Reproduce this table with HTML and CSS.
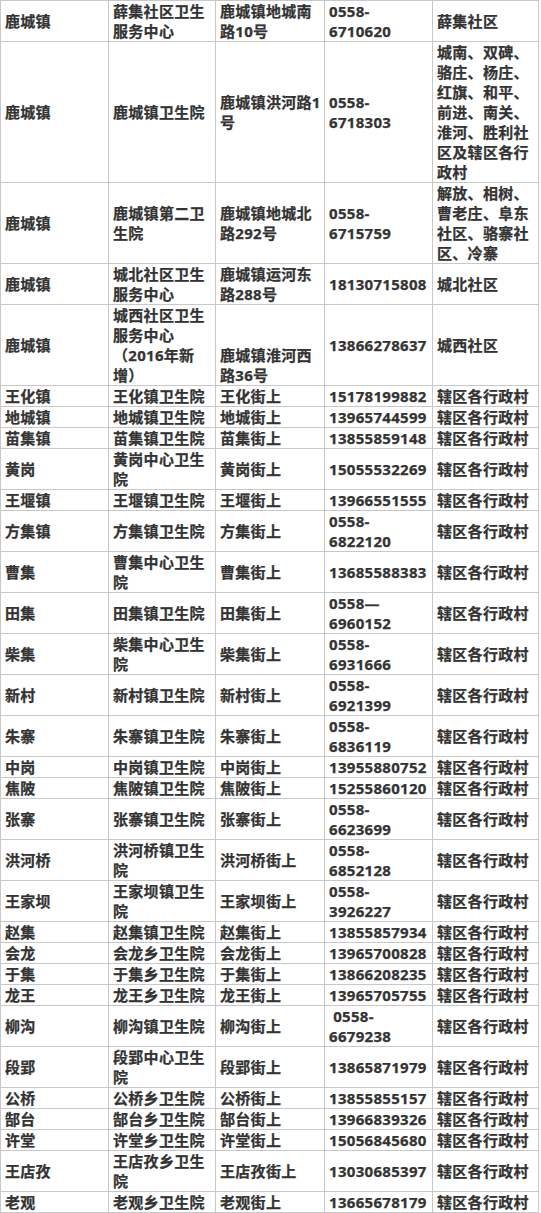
FILE: index.html
```html
<!DOCTYPE html>
<html lang="zh-CN">
<head>
<meta charset="utf-8">
<title>医疗机构一览</title>
<link rel="stylesheet" href="styles.css">
</head>
<body>
<table class="grid">
<colgroup>
<col class="c1"><col class="c2"><col class="c3"><col class="c4"><col class="c5">
</colgroup>
<tbody>
<tr><td>鹿城镇</td><td>薛集社区卫生服务中心</td><td>鹿城镇地城南路10号</td><td>0558-6710620</td><td>薛集社区</td></tr>
<tr><td>鹿城镇</td><td>鹿城镇卫生院</td><td>鹿城镇洪河路1号</td><td>0558-6718303</td><td>城南、双碑、骆庄、杨庄、红旗、和平、前进、南关、淮河、胜利社区及辖区各行政村</td></tr>
<tr><td>鹿城镇</td><td>鹿城镇第二卫生院</td><td>鹿城镇地城北路292号</td><td>0558-6715759</td><td>解放、相树、曹老庄、阜东社区、骆寨社区、冷寨</td></tr>
<tr><td>鹿城镇</td><td>城北社区卫生服务中心</td><td>鹿城镇运河东路288号</td><td>18130715808</td><td>城北社区</td></tr>
<tr><td>鹿城镇</td><td>城西社区卫生服务中心（2016年新增）</td><td><br><br>鹿城镇淮河西路36号</td><td>13866278637</td><td>城西社区</td></tr>
<tr><td>王化镇</td><td>王化镇卫生院</td><td>王化街上</td><td>15178199882</td><td>辖区各行政村</td></tr>
<tr><td>地城镇</td><td>地城镇卫生院</td><td>地城街上</td><td>13965744599</td><td>辖区各行政村</td></tr>
<tr><td>苗集镇</td><td>苗集镇卫生院</td><td>苗集街上</td><td>13855859148</td><td>辖区各行政村</td></tr>
<tr><td>黄岗</td><td>黄岗中心卫生院</td><td>黄岗街上</td><td>15055532269</td><td>辖区各行政村</td></tr>
<tr><td>王堰镇</td><td>王堰镇卫生院</td><td>王堰街上</td><td>13966551555</td><td>辖区各行政村</td></tr>
<tr><td>方集镇</td><td>方集镇卫生院</td><td>方集街上</td><td>0558-6822120</td><td>辖区各行政村</td></tr>
<tr><td>曹集</td><td>曹集中心卫生院</td><td>曹集街上</td><td>13685588383</td><td>辖区各行政村</td></tr>
<tr><td>田集</td><td>田集镇卫生院</td><td>田集街上</td><td>0558—6960152</td><td>辖区各行政村</td></tr>
<tr><td>柴集</td><td>柴集中心卫生院</td><td>柴集街上</td><td>0558-6931666</td><td>辖区各行政村</td></tr>
<tr><td>新村</td><td>新村镇卫生院</td><td>新村街上</td><td>0558-6921399</td><td>辖区各行政村</td></tr>
<tr><td>朱寨</td><td>朱寨镇卫生院</td><td>朱寨街上</td><td>0558-6836119</td><td>辖区各行政村</td></tr>
<tr><td>中岗</td><td>中岗镇卫生院</td><td>中岗街上</td><td>13955880752</td><td>辖区各行政村</td></tr>
<tr><td>焦陂</td><td>焦陂镇卫生院</td><td>焦陂街上</td><td>15255860120</td><td>辖区各行政村</td></tr>
<tr><td>张寨</td><td>张寨镇卫生院</td><td>张寨街上</td><td>0558-6623699</td><td>辖区各行政村</td></tr>
<tr><td>洪河桥</td><td>洪河桥镇卫生院</td><td>洪河桥街上</td><td>0558-6852128</td><td>辖区各行政村</td></tr>
<tr><td>王家坝</td><td>王家坝镇卫生院</td><td>王家坝街上</td><td>0558-3926227</td><td>辖区各行政村</td></tr>
<tr><td>赵集</td><td>赵集镇卫生院</td><td>赵集街上</td><td>13855857934</td><td>辖区各行政村</td></tr>
<tr><td>会龙</td><td>会龙乡卫生院</td><td>会龙街上</td><td>13965700828</td><td>辖区各行政村</td></tr>
<tr><td>于集</td><td>于集乡卫生院</td><td>于集街上</td><td>13866208235</td><td>辖区各行政村</td></tr>
<tr><td>龙王</td><td>龙王乡卫生院</td><td>龙王街上</td><td>13965705755</td><td>辖区各行政村</td></tr>
<tr><td>柳沟</td><td>柳沟镇卫生院</td><td>柳沟街上</td><td>&nbsp;0558-6679238</td><td>辖区各行政村</td></tr>
<tr><td>段郢</td><td>段郢中心卫生院</td><td>段郢街上</td><td>13865871979</td><td>辖区各行政村</td></tr>
<tr><td>公桥</td><td>公桥乡卫生院</td><td>公桥街上</td><td>13855855157</td><td>辖区各行政村</td></tr>
<tr><td>郜台</td><td>郜台乡卫生院</td><td>郜台街上</td><td>13966839326</td><td>辖区各行政村</td></tr>
<tr><td>许堂</td><td>许堂乡卫生院</td><td>许堂街上</td><td>15056845680</td><td>辖区各行政村</td></tr>
<tr><td>王店孜</td><td>王店孜乡卫生院</td><td>王店孜街上</td><td>13030685397</td><td>辖区各行政村</td></tr>
<tr><td>老观</td><td>老观乡卫生院</td><td>老观街上</td><td>13665678179</td><td>辖区各行政村</td></tr>
</tbody>
</table>
</body>
</html>
```

FILE: styles.css
```css
html, body {
  margin: 0;
  padding: 0;
  background: #ffffff;
}

.grid {
  width: 538px;
  table-layout: fixed;
  border-collapse: collapse;
  font-family: "Open Sans", "Noto Sans CJK SC", sans-serif;
  font-size: 15px;
  font-weight: 700;
  line-height: 20px;
  letter-spacing: 0.3px;
  color: #333333;
  -webkit-text-stroke: 0.25px #333333;
}

.c1 { width: 108px; }
.c2 { width: 107px; }
.c3 { width: 109px; }
.c4 { width: 108px; }
.c5 { width: 106px; }

.grid td {
  border: 1px solid #c8c8c8;
  padding: 0 2px 0 4px;
  vertical-align: middle;
  text-align: left;
}
```
